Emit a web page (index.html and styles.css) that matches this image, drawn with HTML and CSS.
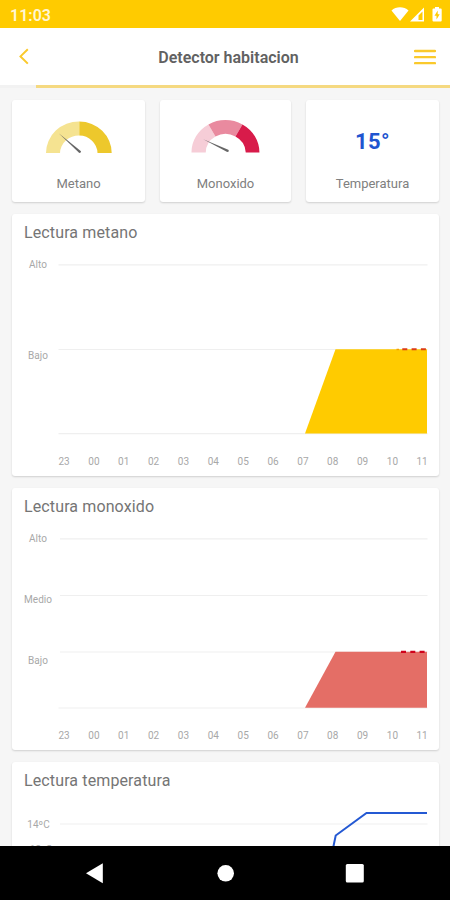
FILE: index.html
```html
<!DOCTYPE html>
<html lang="es">
<head>
<meta charset="utf-8">
<title>Detector habitacion</title>
<link rel="stylesheet" href="styles.css">
</head>
<body>
<div class="screen">
  <div class="status">
    <span class="clock">11:03</span>
    <svg class="status-icons" width="52" height="16" viewBox="390 6 52 16" fill="#fff">
      <path d="M391.500 10.500C396 6.300 404 6.300 408.500 10.500L400 21Z"/>
      <path fill-rule="evenodd" d="M424 7.500V21.500H410ZM422.500 11.500L418.500 15.500V20H422.500Z"/>
      <path fill-rule="evenodd" d="M435 7h4v1.500h1.700q1 0 1 1V20.500q0 1-1 1h-7.200q-1 0-1-1V9.500q0-1 1-1H435ZM437.700 10.500L434.500 15.700H436.500V19.500L439.700 14.200H437.700Z"/>
    </svg>
  </div>
  <header class="header">
    <svg width="12" height="18" viewBox="18 49 12 18"><path d="M27.800 50.300L20.500 57.400L27.800 64.600" fill="none" stroke="#fac92c" stroke-width="2"/></svg>
    <h1>Detector habitacion</h1>
    <svg width="22" height="16" viewBox="414 49 22 16"><path d="M415 51H435M415 57.200H435M415 63.200H435" stroke="#fac92c" stroke-width="2.300" stroke-linecap="round"/></svg>
  </header>
  <div class="rule"><i></i></div>
  <main class="content">
    <section class="tiles">
      <div class="card tile">
        <svg width="133" height="74" viewBox="12 100 133 74">
          <path fill="#f5e391" d="M46 153A33 31.500 0 0 1 79.300 121.500V135.500A19 18 0 0 0 60 153Z"/>
          <path fill="#edc82c" d="M79.300 121.500A32.500 31.500 0 0 1 111.700 153H97.500A18.500 18 0 0 0 79.300 135.500Z"/>
          <path fill="#666" d="M59 133.500L81 151.200Q81.300 152.800 79.300 153Z"/>
        </svg>
        <span>Metano</span>
      </div>
      <div class="card tile">
        <svg width="131" height="74" viewBox="160.250 100 131 74">
          <path fill="#f6cdd7" d="M191.700 152.500A34 32.500 0 0 1 208.700 124.400L215.700 136.500A20 19 0 0 0 206 152.500Z"/>
          <path fill="#e98a9f" d="M208.700 124.400A34 32.500 0 0 1 242.700 124.400L235.700 136.500A20 19 0 0 0 215.700 136.500Z"/>
          <path fill="#d81b4a" d="M242.700 124.400A34 32.500 0 0 1 259.700 152.500H246A20 19 0 0 0 235.700 136.500Z"/>
          <path fill="#666" d="M203.500 139.200L228.500 149.700Q230 151.500 227.500 152Z"/>
        </svg>
        <span>Monoxido</span>
      </div>
      <div class="card tile">
        <strong>15°</strong>
        <span>Temperatura</span>
      </div>
    </section>

    <section class="card chart">
      <h2>Lectura metano</h2>
      <svg width="427" height="226" viewBox="12 250 427 226">
        <path class="grid" d="M58.500 264.800H427.500M58.500 349.500H427.500M58.500 433.700H427.500"/>
        <path fill="#ffcb00" d="M305 433.500L335.500 349.300H427V433.500Z"/>
        <path stroke="#f5a000" stroke-width="1.500" d="M396.500 349.500H399"/>
        <path stroke="#dc3c14" stroke-width="2" stroke-dasharray="5 4.300" d="M402.300 349.300H426.500"/>
        <g class="y"><text x="38" y="267.500">Alto</text><text x="38" y="359">Bajo</text></g>
        <g class="x"><text x="64" y="464.500">23</text><text x="93.900" y="464.500">00</text><text x="123.700" y="464.500">01</text><text x="153.600" y="464.500">02</text><text x="183.400" y="464.500">03</text><text x="213.300" y="464.500">04</text><text x="243.200" y="464.500">05</text><text x="273" y="464.500">06</text><text x="302.900" y="464.500">07</text><text x="332.700" y="464.500">08</text><text x="362.600" y="464.500">09</text><text x="392.400" y="464.500">10</text><text x="422" y="464.500">11</text></g>
      </svg>
    </section>

    <section class="card chart">
      <h2>Lectura monoxido</h2>
      <svg width="427" height="226" viewBox="12 524 427 226">
        <path class="grid" d="M60 538.800H427.500M60 595.500H427.500M60 652H427.500M58.500 708H427.500"/>
        <path fill="#e46e66" d="M305 707.700L335.500 651.700H427V707.700Z"/>
        <path stroke="#d0021b" stroke-width="2.300" stroke-dasharray="5 4.300" d="M401 651.900H425.500"/>
        <g class="y"><text x="38" y="541.500">Alto</text><text x="38" y="602.500">Medio</text><text x="38" y="663.500">Bajo</text></g>
        <g class="x"><text x="64" y="738.500">23</text><text x="93.900" y="738.500">00</text><text x="123.700" y="738.500">01</text><text x="153.600" y="738.500">02</text><text x="183.400" y="738.500">03</text><text x="213.300" y="738.500">04</text><text x="243.200" y="738.500">05</text><text x="273" y="738.500">06</text><text x="302.900" y="738.500">07</text><text x="332.700" y="738.500">08</text><text x="362.600" y="738.500">09</text><text x="392.400" y="738.500">10</text><text x="422" y="738.500">11</text></g>
      </svg>
    </section>

    <section class="card chart">
      <h2>Lectura temperatura</h2>
      <svg width="427" height="226" viewBox="12 798 427 226">
        <path class="grid" d="M60 824H427.500"/>
        <path fill="none" stroke="#2459d3" stroke-width="2" d="M332.500 851L335.700 835.500L366.500 813H427"/>
        <g class="y"><text x="38.500" y="827.500">14ºC</text><text x="41" y="852.500">12ºC</text></g>
      </svg>
    </section>
  </main>
  <nav class="navbar">
    <svg width="450" height="54" viewBox="0 846 450 54" fill="#fff">
      <path d="M86 873.300L102.800 863.200V883.200Z"/>
      <circle cx="225.700" cy="873.300" r="8.300"/>
      <rect x="345.800" y="864" width="18" height="18.500" rx="1.500"/>
    </svg>
  </nav>
</div>
</body>
</html>
```
FILE: styles.css
```css
* { box-sizing: border-box; }

body {
  margin: 0;
  font-family: Roboto, "Liberation Sans", sans-serif;
  background: #f6f6f6;
}

.screen {
  width: 450px;
  height: 900px;
  display: flex;
  flex-direction: column;
  overflow: hidden;
}

.status {
  flex: none;
  height: 28px;
  padding: 2px 8px 0 10px;
  display: flex;
  align-items: center;
  justify-content: space-between;
  background: #ffcb00;
}

.clock {
  color: #fff6d4;
  font-size: 16px;
  font-weight: 600;
}

.status-icons { margin-top: -2px; }

.header {
  flex: none;
  height: 57px;
  padding: 1px 14px 0 18px;
  display: flex;
  align-items: center;
  justify-content: space-between;
  background: #fff;
}

.header h1 {
  margin: 1px 0 0 13px;
  font-size: 16px;
  font-weight: 600;
  color: #616161;
}

.rule {
  flex: none;
  height: 3px;
  padding-left: 36px;
  background: #f2f2f2;
}

.rule i {
  display: block;
  height: 3px;
  background: #f5d980;
}

.content {
  flex: 1;
  min-height: 0;
  overflow: hidden;
  padding: 12px 11px 0 12px;
  display: flex;
  flex-direction: column;
  gap: 12px;
}

.card {
  flex: none;
  background: #fff;
  border-radius: 3px;
  box-shadow: 0 1px 2px rgba(0, 0, 0, 0.16);
}

.tiles {
  flex: none;
  display: grid;
  grid-template-columns: 133px 131px 133px;
  justify-content: space-between;
}

.tile {
  height: 102px;
  display: flex;
  flex-direction: column;
  align-items: center;
}

.tile svg { display: block; }

.tile span {
  font-size: 13px;
  line-height: 20px;
  color: #808080;
}

.tile strong {
  height: 74px;
  line-height: 83px;
  font-size: 22px;
  font-weight: 700;
  letter-spacing: 0.4px;
  color: #1f55d0;
}

.chart { height: 262px; }

.chart h2 {
  margin: 0;
  height: 36px;
  padding-left: 12px;
  font-size: 16px;
  font-weight: 400;
  line-height: 37px;
  letter-spacing: 0.12px;
  color: #757575;
}

.chart svg { display: block; }

.grid {
  fill: none;
  stroke: #efefef;
  stroke-width: 1.2;
}

.y, .x {
  fill: #a8a8a8;
  font-size: 10px;
  text-anchor: middle;
}

.navbar {
  flex: none;
  height: 54px;
  background: #000;
}

.navbar svg { display: block; }
```
